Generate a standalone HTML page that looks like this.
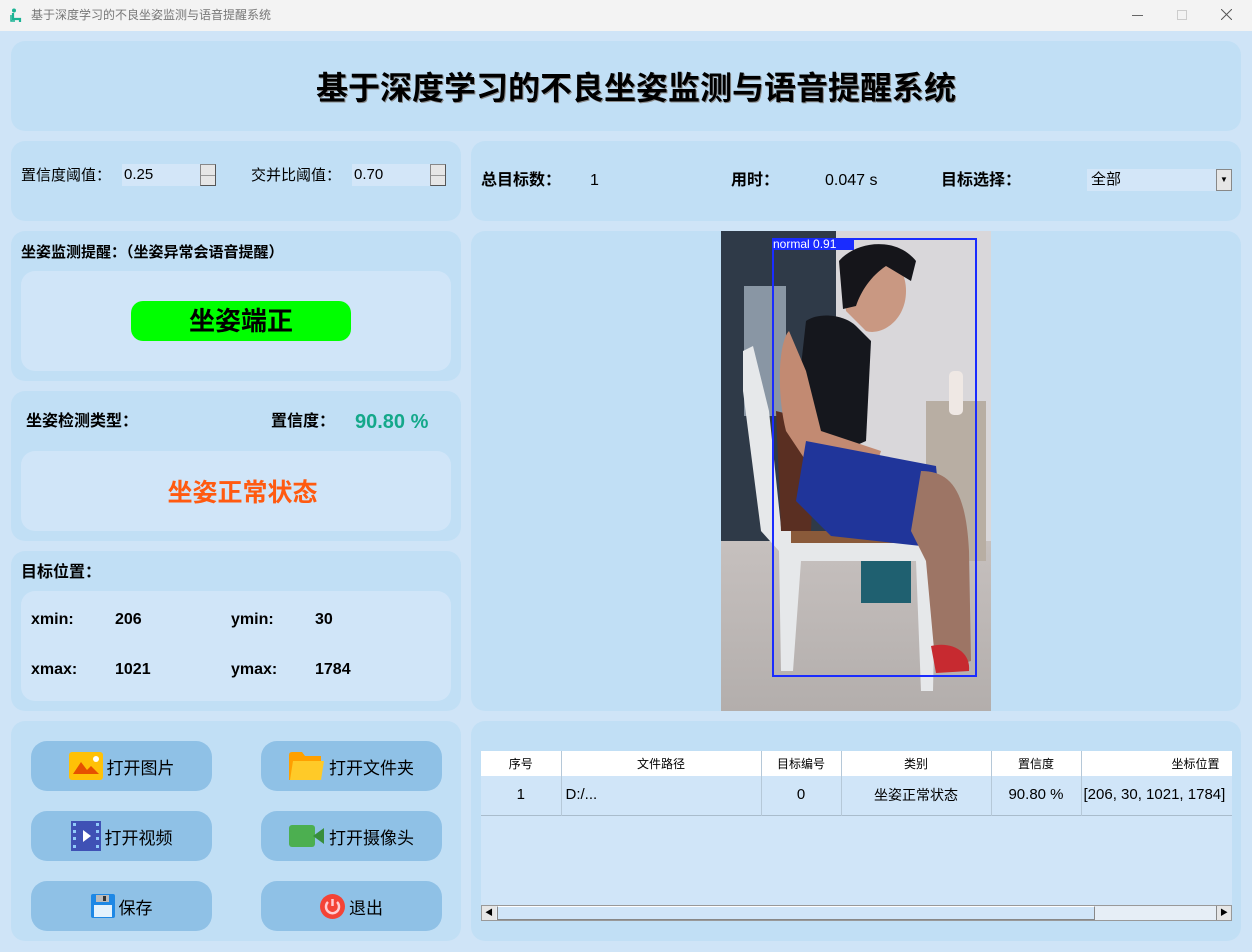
<!DOCTYPE html>
<html><head><meta charset="utf-8">
<style>
*{margin:0;padding:0;box-sizing:border-box}
body{width:1252px;height:952px;overflow:hidden;background:#cfe4f7;font-family:"Liberation Sans","Noto Sans CJK SC",sans-serif;position:relative;color:#000}
.a{position:absolute;line-height:20px}
.p{position:absolute;background:#c1dff5;border-radius:14px}
.in{position:absolute;background:#d0e5f8;border-radius:14px}
.btn{position:absolute;background:#8fc1e6;border-radius:16px;display:flex;align-items:center;justify-content:center;font-size:17px;gap:4px}
.b{font-weight:bold}
.spin{position:absolute;background:#d3e6f8;height:22px;font-size:15px;padding-left:2px;line-height:22px}
.arr{position:absolute;width:16px;height:22px;background:#e6e6e6;border:1px solid #888;border-right-color:#555;border-bottom-color:#555}
.arr:before{content:"";position:absolute;left:0;right:0;top:10px;border-top:1px solid #999}
th,td{font-weight:normal;text-align:center;border-right:1px solid #b5c8d8}
</style></head><body>
<!-- title bar -->
<div class="a" style="left:0;top:0;width:1252px;height:31px;background:#f3f3f3"></div>
<svg class="a" style="left:10px;top:8px" width="14" height="15" viewBox="0 0 14 15"><circle cx="4" cy="2.5" r="2" fill="#1bb394"/><path d="M3 5v6h7v3" stroke="#1bb394" stroke-width="2.2" fill="none"/><path d="M1 7v6h4" stroke="#1bb394" stroke-width="1.5" fill="none"/></svg>
<div class="a" style="left:31px;top:5px;font-size:12px;color:#777">基于深度学习的不良坐姿监测与语音提醒系统</div>
<div class="a" style="left:1132px;top:15px;width:11px;border-top:1px solid #666"></div>
<div class="a" style="left:1177px;top:10px;width:10px;height:10px;border:1px solid #ccc"></div>
<svg class="a" style="left:1221px;top:9px" width="11" height="11"><path d="M0 0L11 11M11 0L0 11" stroke="#555" stroke-width="1"/></svg>

<!-- header -->
<div class="p" style="left:11px;top:41px;width:1230px;height:90px"></div>
<div class="a b" style="left:21px;top:70px;width:1230px;text-align:center;font-size:32px;line-height:36px;text-shadow:1px 1px 0 #888">基于深度学习的不良坐姿监测与语音提醒系统</div>

<!-- params -->
<div class="p" style="left:11px;top:141px;width:450px;height:80px"></div>
<div class="a" style="left:21px;top:166px;font-size:15px">置信度阈值：</div>
<div class="spin" style="left:122px;top:164px;width:78px">0.25</div>
<div class="arr" style="left:200px;top:164px"></div>
<div class="a" style="left:251px;top:166px;font-size:15px">交并比阈值：</div>
<div class="spin" style="left:352px;top:164px;width:78px">0.70</div>
<div class="arr" style="left:430px;top:164px"></div>

<!-- stats -->
<div class="p" style="left:471px;top:141px;width:770px;height:80px"></div>
<div class="a b" style="left:481px;top:171px;font-size:16px">总目标数：</div>
<div class="a" style="left:590px;top:171px;font-size:16px">1</div>
<div class="a b" style="left:731px;top:171px;font-size:16px">用时：</div>
<div class="a" style="left:825px;top:171px;font-size:16px">0.047 s</div>
<div class="a b" style="left:941px;top:171px;font-size:16px">目标选择：</div>
<div class="a" style="left:1087px;top:169px;width:130px;height:22px;background:#d3e6f8;font-size:15px;padding:1px 4px">全部</div>
<div class="a" style="left:1216px;top:169px;width:16px;height:22px;background:#e6e6e6;border:1px solid #888;font-size:8px;text-align:center;line-height:20px">▼</div>

<!-- reminder -->
<div class="p" style="left:11px;top:231px;width:450px;height:150px"></div>
<div class="a b" style="left:21px;top:243px;font-size:15px">坐姿监测提醒：（坐姿异常会语音提醒）</div>
<div class="in" style="left:21px;top:271px;width:430px;height:100px"></div>
<div class="a b" style="left:131px;top:301px;width:220px;height:40px;background:#00ff00;border-radius:12px;text-align:center;font-size:26px;line-height:40px">坐姿端正</div>

<!-- type -->
<div class="p" style="left:11px;top:391px;width:450px;height:150px"></div>
<div class="a b" style="left:26px;top:412px;font-size:16px">坐姿检测类型：</div>
<div class="a b" style="left:271px;top:412px;font-size:16px">置信度：</div>
<div class="a b" style="left:355px;top:411px;font-size:20px;line-height:22px;color:#14a88a">90.80 %</div>
<div class="in" style="left:21px;top:451px;width:430px;height:80px"></div>
<div class="a b" style="left:21px;top:476px;width:443px;text-align:center;font-size:25px;line-height:34px;color:#ff5a10">坐姿正常状态</div>

<!-- position -->
<div class="p" style="left:11px;top:551px;width:450px;height:160px"></div>
<div class="a b" style="left:21px;top:563px;font-size:16px">目标位置：</div>
<div class="in" style="left:21px;top:591px;width:430px;height:110px"></div>
<div class="a b" style="left:31px;top:610px;font-size:16px">xmin:</div>
<div class="a b" style="left:115px;top:610px;font-size:16px">206</div>
<div class="a b" style="left:231px;top:610px;font-size:16px">ymin:</div>
<div class="a b" style="left:315px;top:610px;font-size:16px">30</div>
<div class="a b" style="left:31px;top:660px;font-size:16px">xmax:</div>
<div class="a b" style="left:115px;top:660px;font-size:16px">1021</div>
<div class="a b" style="left:231px;top:660px;font-size:16px">ymax:</div>
<div class="a b" style="left:315px;top:660px;font-size:16px">1784</div>

<!-- image panel -->
<div class="p" style="left:471px;top:231px;width:770px;height:480px"></div>
<div class="a" style="left:721px;top:231px;width:270px;height:480px;overflow:hidden;background:#c9c5c4">
  <div class="a" style="left:0;top:0;width:270px;height:310px;background:#d9d7da"></div>
  <div class="a" style="left:0;top:0;width:115px;height:310px;background:#2f3a48"></div>
  <div class="a" style="left:23px;top:55px;width:42px;height:130px;background:#8996a4"></div>
  <div class="a" style="left:0;top:310px;width:270px;height:170px;background:linear-gradient(#c6c0be,#b3aeac)"></div>
  <div class="a" style="left:205px;top:170px;width:60px;height:160px;background:#b8aea3"></div>
  <div class="a" style="left:228px;top:140px;width:14px;height:44px;background:#efe8e4;border-radius:5px"></div>
  <svg class="a" style="left:0;top:0" width="270" height="480">
    <path d="M22 120 L32 115 L48 180 L60 296 L70 300 L200 300 L215 320 L212 460 L200 460 L195 330 L80 330 L72 440 L60 440 L58 320 L40 300 L22 160Z" fill="#e6e8ea"/>
    <path d="M55 180 L95 190 L90 300 L60 300Z" fill="#5a2f22"/>
    <path d="M70 300 L180 300 L180 312 L70 312Z" fill="#8a5a3a"/>
    <path d="M120 30 C150 10 185 25 185 60 C185 90 160 105 145 100 L125 80Z" fill="#c99882"/>
    <path d="M118 30 C135 10 175 5 195 30 L190 50 L165 35 C150 45 140 60 135 75 L122 78Z" fill="#15151a"/>
    <path d="M85 90 C100 80 125 85 135 95 L150 110 L145 210 L100 230 L75 180Z" fill="#15171d"/>
    <path d="M68 100 C58 110 55 160 65 200 L85 230 L150 250 L160 220 L100 200 L85 140Z" fill="#c28a72"/>
    <path d="M85 210 L215 235 L220 285 L200 315 L110 305 L75 270Z" fill="#20359a"/>
    <path d="M200 240 C230 240 245 260 248 320 L250 430 L215 440 L205 330 L190 300Z" fill="#9d7565"/>
    <path d="M210 415 C230 410 250 420 248 440 L215 442Z" fill="#c72a30"/>
    <path d="M140 330 L190 330 L190 372 L140 372Z" fill="#1f6070"/>
  </svg>
  <div class="a" style="left:51px;top:7px;width:205px;height:439px;border:2px solid #1a2cff"></div>
  <div class="a" style="left:51px;top:7px;width:82px;height:12px;background:#1a2cff;color:#fff;font-size:12px;line-height:12px;padding-left:1px">normal 0.91</div>
</div>

<!-- buttons -->
<div class="p" style="left:11px;top:721px;width:450px;height:220px"></div>
<div class="btn" style="left:31px;top:741px;width:181px;height:50px"><svg width="34" height="28"><rect width="34" height="28" rx="3" fill="#ffc107"/><path d="M4 22 L12 10 L18 18 L22 14 L30 22Z" fill="#e65100"/><circle cx="27" cy="7" r="3" fill="#fff"/></svg>打开图片</div>
<div class="btn" style="left:261px;top:741px;width:181px;height:50px"><svg width="36" height="28"><path d="M0 3 Q0 0 3 0 L13 0 L16 4 L32 4 L32 28 L0 28Z" fill="#ffa000"/><path d="M4 9 L35 9 L32 28 L1 28Z" fill="#ffca28"/></svg>打开文件夹</div>
<div class="btn" style="left:31px;top:811px;width:181px;height:50px"><svg width="30" height="30"><rect width="30" height="30" fill="#3f51b5"/><g fill="#90caf9"><rect x="2" y="2" width="3" height="3"/><rect x="2" y="9" width="3" height="3"/><rect x="2" y="16" width="3" height="3"/><rect x="2" y="24" width="3" height="3"/><rect x="25" y="2" width="3" height="3"/><rect x="25" y="9" width="3" height="3"/><rect x="25" y="16" width="3" height="3"/><rect x="25" y="24" width="3" height="3"/></g><path d="M12 9 L20 15 L12 21Z" fill="#fff"/></svg>打开视频</div>
<div class="btn" style="left:261px;top:811px;width:181px;height:50px"><svg width="36" height="22"><rect width="26" height="22" rx="3" fill="#4caf50"/><path d="M24 11 L35 3 L35 19Z" fill="#388e3c"/></svg>打开摄像头</div>
<div class="btn" style="left:31px;top:881px;width:181px;height:50px"><svg width="24" height="24"><rect width="24" height="24" rx="2" fill="#1e88e5"/><rect x="5" y="1" width="13" height="7" fill="#bbb"/><rect x="12" y="2" width="3" height="5" fill="#333"/><rect x="3" y="11" width="18" height="12" fill="#e3f2fd"/></svg>保存</div>
<div class="btn" style="left:261px;top:881px;width:181px;height:50px"><svg width="25" height="25"><circle cx="12.5" cy="12.5" r="12.5" fill="#f44336"/><path d="M8 8 A6.5 6.5 0 1 0 17 8" stroke="#ffcdd2" stroke-width="2.5" fill="none"/><path d="M12.5 5 V12" stroke="#ffcdd2" stroke-width="2.5"/></svg>退出</div>

<!-- table -->
<div class="p" style="left:471px;top:721px;width:770px;height:220px"></div>
<div class="a" style="left:481px;top:751px;width:751px;height:154px;background:#d0e5f8;overflow:hidden">
<table style="border-collapse:collapse;font-size:15px;width:800px;table-layout:fixed">
<tr style="background:#fff;height:25px;font-size:12px"><th style="width:80px">序号</th><th style="width:200px">文件路径</th><th style="width:80px">目标编号</th><th style="width:150px">类别</th><th style="width:90px">置信度</th><th style="width:200px;text-align:left;padding-left:90px">坐标位置</th></tr>
<tr style="height:39px;border-bottom:1px solid #a9bccc"><td>1</td><td style="text-align:left;padding-left:4px">D:/...</td><td>0</td><td style="font-size:14px">坐姿正常状态</td><td>90.80 %</td><td style="text-align:left;padding-left:2px;white-space:nowrap">[206, 30, 1021, 1784]</td></tr>
</table></div>
<div class="a" style="left:481px;top:905px;width:751px;height:16px;background:#e6eef6;border:1px solid #999"></div>
<div class="a" style="left:497px;top:906px;width:598px;height:14px;background:#d0e5f8;border:1px solid #888;border-top-color:#fff"></div>
<div class="a" style="left:482px;top:906px;width:14px;height:14px;background:#e6e6e6;font-size:8px;text-align:center;line-height:14px">◀</div>
<div class="a" style="left:1216px;top:906px;width:15px;height:14px;background:#e6e6e6;border-left:1px solid #888;font-size:8px;text-align:center;line-height:14px">▶</div>
</body></html>
